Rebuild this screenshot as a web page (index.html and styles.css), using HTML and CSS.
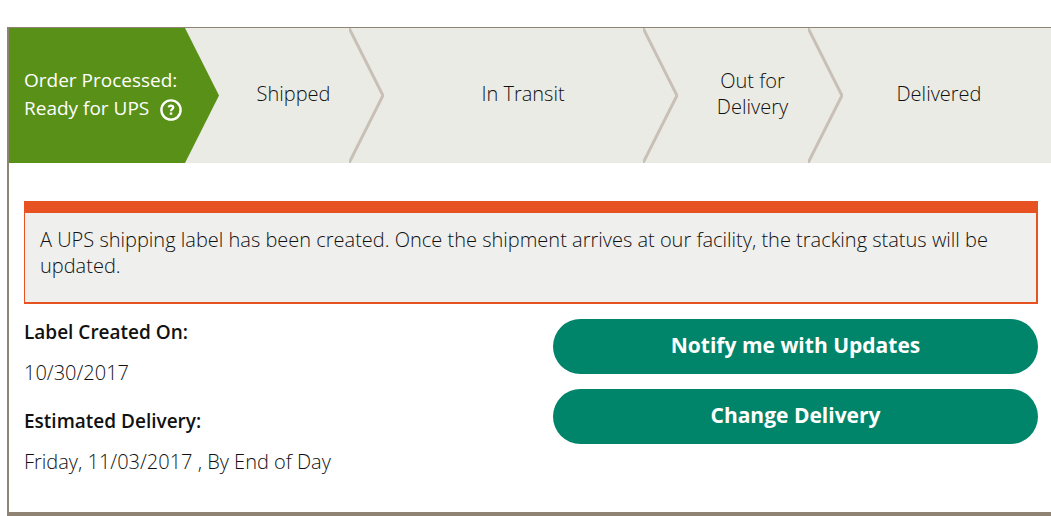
FILE: index.html
```html
<!DOCTYPE html>
<html lang="en">
<head>
    <meta charset="UTF-8">
    <meta name="viewport" content="width=device-width, initial-scale=1.0">
    <title>Tracking Details</title>
    <link rel="stylesheet" href="styles.css">
</head>
<body>
    <main class="card">
        <ol class="steps">
            <li class="step step-current" aria-current="step">
                <div class="step-text">Order Processed:<br>Ready for UPS
                    <button type="button" class="help" aria-label="Help">
                        <svg viewBox="0 0 22 22" fill="none" stroke="currentColor">
                            <circle cx="11" cy="11" r="9.6" stroke-width="2.4"/>
                            <path d="M8.7 8.4C8.9 7.100 9.800 6.700 11 6.700c1.400 0 2.200.7 2.200 1.800 0 1.700-2.200 1.700-2.200 3.700" stroke-width="2.300"/>
                            <path d="M11 13.400v2.400" stroke-width="2.500"/>
                        </svg>
                    </button>
                </div>
            </li>
            <li class="step">
                Shipped
                <svg class="chevron" viewBox="0 0 35 135" preserveAspectRatio="none" aria-hidden="true"><path d="M0 0L34 67.5L0 135"/></svg>
            </li>
            <li class="step">
                In Transit
                <svg class="chevron" viewBox="0 0 35 135" preserveAspectRatio="none" aria-hidden="true"><path d="M0 0L34 67.5L0 135"/></svg>
            </li>
            <li class="step">
                Out for<br>Delivery
                <svg class="chevron" viewBox="0 0 35 135" preserveAspectRatio="none" aria-hidden="true"><path d="M0 0L34 67.5L0 135"/></svg>
            </li>
            <li class="step">Delivered</li>
        </ol>

        <div class="content">
            <p class="notice">A UPS shipping label has been created. Once the shipment arrives at our facility, the tracking status will be updated.</p>

            <div class="columns">
                <dl class="details">
                    <dt>Label Created On:</dt>
                    <dd>10/30/2017</dd>
                    <dt>Estimated Delivery:</dt>
                    <dd>Friday, 11/03/2017 , By End of Day</dd>
                </dl>
                <div class="actions">
                    <button type="button" class="btn">Notify me with Updates</button>
                    <button type="button" class="btn">Change Delivery</button>
                </div>
            </div>
        </div>
    </main>
</body>
</html>
```
FILE: styles.css
```css
:root {
    --green: #599017;
    --teal: #00856a;
    --orange: #e65222;
    --taupe: #8f8374;
}

* {
    box-sizing: border-box;
}

body {
    margin: 0;
    padding: 27px 0 0 7px;
    background: #fff;
    color: #111;
    font-family: "Open Sans", "Noto Sans", sans-serif;
    font-size: 20px;
    font-weight: 300;
    line-height: 26px;
}

.card {
    border: solid var(--taupe);
    border-width: 1px 0 4px 2px;
}

/* progress bar */
.steps {
    display: grid;
    grid-template-columns: 210fr 165fr 294fr 165fr 208fr;
    min-height: 135px;
    margin: 0;
    padding: 0;
    list-style: none;
    background: #eaebe4;
}

.step {
    position: relative;
    display: flex;
    align-items: center;
    justify-content: center;
    padding: 0 16px 3px 0;
    text-align: center;
}

.step-current {
    justify-content: flex-start;
    padding: 0 0 3px 15px;
    background: var(--green);
    clip-path: polygon(0 0, calc(100% - 34px) 0, 100% 50%, calc(100% - 34px) 100%, 0 100%);
    color: #fff;
    font-size: 19px;
    font-weight: 400;
    line-height: 28px;
    text-align: left;
    white-space: nowrap;
}

.chevron {
    position: absolute;
    top: 0;
    right: 0;
    width: 35px;
    height: 100%;
    fill: none;
    stroke: #c8c0b6;
    stroke-width: 3;
}

.help {
    width: 22px;
    height: 22px;
    margin-left: 6px;
    padding: 0;
    border: none;
    background: none;
    color: inherit;
    vertical-align: middle;
    cursor: pointer;
}

.help svg {
    display: block;
}

/* details */
.content {
    padding: 38px 13px 37px 15px;
}

.notice {
    margin: 0 0 15px;
    padding: 14px 15px 23px;
    border: solid var(--orange);
    border-width: 12px 2px 2px 1px;
    background: #efefed;
}

.columns {
    display: grid;
    grid-template-columns: 1fr 1fr;
    gap: 44px;
}

.details {
    margin: 0;
}

.details dt {
    margin-bottom: 15px;
    font-size: 19px;
    font-weight: 600;
}

.details dd {
    margin: 0 0 22px;
}

.details dd:last-child {
    margin-bottom: 0;
}

.actions {
    display: flex;
    flex-direction: column;
    gap: 15px;
}

.btn {
    height: 55px;
    padding: 0 15px 4px;
    border: none;
    border-radius: 28px;
    background: var(--teal);
    color: #fff;
    font: inherit;
    font-size: 21px;
    font-weight: 700;
    cursor: pointer;
}
```
